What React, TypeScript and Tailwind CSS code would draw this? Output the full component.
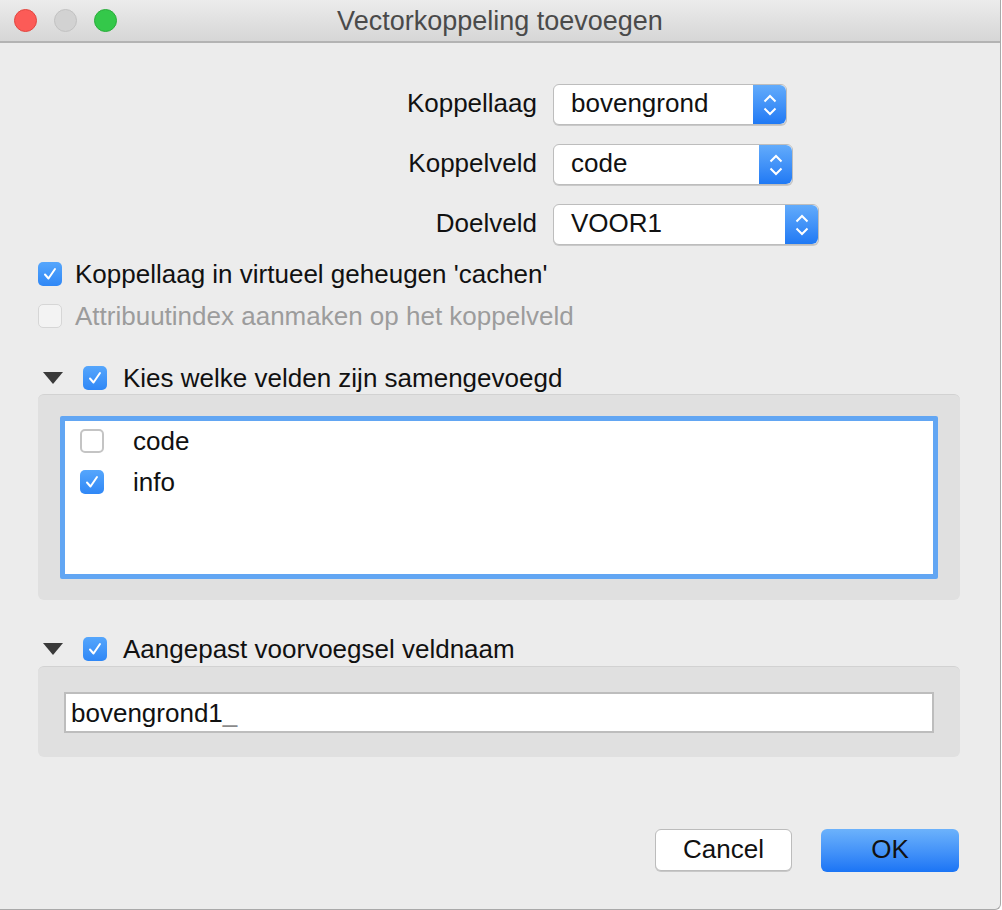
const font = "font-['Liberation_Sans',Arial,sans-serif]";

const Check = () => (
  <svg width="16" height="16" viewBox="0 0 16 16" fill="none">
    <path d="M3 8.5 L6.5 12.5 L13 3" stroke="white" strokeWidth="2" strokeLinecap="round" strokeLinejoin="round" />
  </svg>
);

const Checkbox = ({ checked, disabled }: { checked?: boolean; disabled?: boolean }) => {
  if (checked)
    return (
      <div className="w-6 h-6 rounded-[5px] bg-gradient-to-b from-[#55a6fc] to-[#2f87f6] flex items-center justify-center shrink-0">
        <Check />
      </div>
    );
  if (disabled) return <div className="w-6 h-6 rounded-[5px] bg-[#f3f3f3] border border-[#d6d6d6] shrink-0" />;
  return <div className="w-6 h-6 rounded-[5px] bg-white border-2 border-[#c4c4c4] shrink-0" />;
};

const Stepper = () => (
  <div className="w-[33px] self-stretch bg-gradient-to-b from-[#62abfb] to-[#1f79f4] rounded-r-[6px] flex items-center justify-center">
    <svg width="14" height="24" viewBox="0 0 14 24" fill="none">
      <path d="M1.5 8.5 L7 3 L12.5 8.5" stroke="white" strokeWidth="2" />
      <path d="M1.5 15.5 L7 21 L12.5 15.5" stroke="white" strokeWidth="2" />
    </svg>
  </div>
);

const SelectRow = ({ label, value, width }: { label: string; value: string; width: number }) => (
  <div className="flex items-center h-[41px]">
    <div className="w-[537px] text-right pb-[4px]">{label}</div>
    <div
      className="ml-4 h-[41px] flex items-stretch bg-white border border-[#bdbdbd] rounded-[6px] shadow-[0_1px_0_#c9c9c9]"
      style={{ width }}
    >
      <div className="flex-1 flex items-center pl-[17px] pb-[4px]">{value}</div>
      <Stepper />
    </div>
  </div>
);

const Triangle = () => (
  <svg width="22" height="14" viewBox="0 0 22 14">
    <path d="M1 1 H21 L11 13 Z" fill="#3a3a3a" />
  </svg>
);

const SectionHeader = ({ label, top }: { label: string; top: number }) => (
  <div className="flex items-center pl-[42px] h-[30px]" style={{ marginTop: top }}>
    <Triangle />
    <div className="ml-[19px]">
      <Checkbox checked />
    </div>
    <span className="ml-[16px]">{label}</span>
  </div>
);

export default function App() {
  return (
    <div className={`w-[1002px] h-[910px] bg-white ${font}`}>
      <div className="w-[1001px] h-[910px] bg-[#ececec] border-r border-b border-[#a9a9a9] rounded-br-[6px] flex flex-col text-[26px] leading-[30px] text-[#111]">
        {/* title bar */}
        <div className="h-[43px] shrink-0 bg-gradient-to-b from-[#ececec] to-[#d6d6d6] border-b-2 border-[#b3b3b3] flex items-center relative">
          <div className="flex items-center gap-[17px] pl-[14px]">
            <div className="w-[23px] h-[23px] rounded-full bg-[#fc5b57] border border-[#e2463f]" />
            <div className="w-[23px] h-[23px] rounded-full bg-[#d2d2d2] border border-[#c2c2c2]" />
            <div className="w-[23px] h-[23px] rounded-full bg-[#34c84a] border border-[#2aad3b]" />
          </div>
          <div className="absolute inset-0 flex items-center justify-center text-[27px] text-[#4a4a4a] pointer-events-none">
            Vectorkoppeling toevoegen
          </div>
        </div>

        {/* form */}
        <div className="flex flex-col gap-[19px] pt-[41px]">
          <SelectRow label="Koppellaag" value="bovengrond" width={234} />
          <SelectRow label="Koppelveld" value="code" width={240} />
          <SelectRow label="Doelveld" value="VOOR1" width={266} />
        </div>

        <div className="pl-[38px] mt-[14px] flex flex-col gap-[12px]">
          <div className="flex items-center gap-[13px] h-[30px]">
            <Checkbox checked />
            <span>Koppellaag in virtueel geheugen 'cachen'</span>
          </div>
          <div className="flex items-center gap-[13px] h-[30px]">
            <Checkbox disabled />
            <span className="text-[#9c9c9c]">Attribuutindex aanmaken op het koppelveld</span>
          </div>
        </div>

        {/* section 1 */}
        <SectionHeader label="Kies welke velden zijn samengevoegd" top={32} />
        <div className="mx-[38px] w-[922px] mt-[1px] h-[206px] bg-[#e0e0e0] border-t border-[#d2d2d2] rounded-[6px] pt-[21px] px-[22px]">
          <div className="h-[163px] bg-white border-[5px] border-[#62a6f3] rounded-[2px] pt-[5px] pl-[15px] flex flex-col gap-[11px]">
            <div className="flex items-center h-[30px]">
              <Checkbox />
              <span className="ml-[29px]">code</span>
            </div>
            <div className="flex items-center h-[30px]">
              <Checkbox checked />
              <span className="ml-[29px]">info</span>
            </div>
          </div>
        </div>

        {/* section 2 */}
        <SectionHeader label="Aangepast voorvoegsel veldnaam" top={34} />
        <div className="mx-[38px] w-[922px] mt-[2px] h-[91px] bg-[#e0e0e0] border-t border-[#d2d2d2] rounded-[6px] pt-[25px] px-[26px]">
          <div className="h-[41px] bg-white border-2 border-[#bdbdbd] flex items-center pl-[5px]">
            bovengrond1<span className="text-[#8a8a8a]">_</span>
          </div>
        </div>

        {/* buttons */}
        <div className="flex justify-end gap-[29px] pr-[41px] mt-[72px]">
          <button className="w-[137px] h-[42px] bg-white border border-[#bcbcbc] rounded-[6px] shadow-[0_1px_0_#c8c8c8] text-[26px] text-[#111] pb-[3px]">
            Cancel
          </button>
          <button className="w-[138px] h-[43px] bg-gradient-to-b from-[#6cb2fb] to-[#1a74f5] rounded-[6px] text-[26px] text-[#111] pb-[4px]">
            OK
          </button>
        </div>
      </div>
    </div>
  );
}
